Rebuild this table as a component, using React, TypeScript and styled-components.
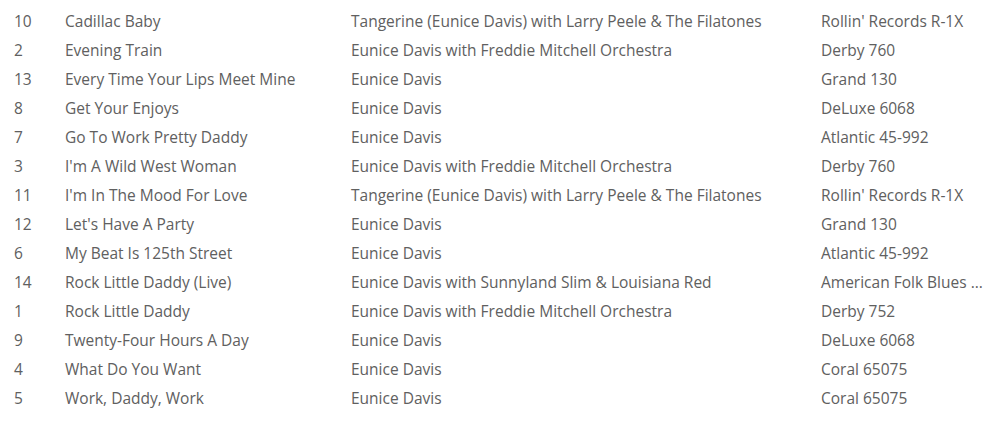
import styled, { createGlobalStyle } from 'styled-components'

const TRACKS = [
    ['10', 'Cadillac Baby', 'Tangerine (Eunice Davis) with Larry Peele & The Filatones', "Rollin' Records R-1X"],
    ['2', 'Evening Train', 'Eunice Davis with Freddie Mitchell Orchestra', 'Derby 760'],
    ['13', 'Every Time Your Lips Meet Mine', 'Eunice Davis', 'Grand 130'],
    ['8', 'Get Your Enjoys', 'Eunice Davis', 'DeLuxe 6068'],
    ['7', 'Go To Work Pretty Daddy', 'Eunice Davis', 'Atlantic 45-992'],
    ['3', "I'm A Wild West Woman", 'Eunice Davis with Freddie Mitchell Orchestra', 'Derby 760'],
    ['11', "I'm In The Mood For Love", 'Tangerine (Eunice Davis) with Larry Peele & The Filatones', "Rollin' Records R-1X"],
    ['12', "Let's Have A Party", 'Eunice Davis', 'Grand 130'],
    ['6', 'My Beat Is 125th Street', 'Eunice Davis', 'Atlantic 45-992'],
    ['14', 'Rock Little Daddy (Live)', 'Eunice Davis with Sunnyland Slim & Louisiana Red', 'American Folk Blues ...'],
    ['1', 'Rock Little Daddy', 'Eunice Davis with Freddie Mitchell Orchestra', 'Derby 752'],
    ['9', 'Twenty-Four Hours A Day', 'Eunice Davis', 'DeLuxe 6068'],
    ['4', 'What Do You Want', 'Eunice Davis', 'Coral 65075'],
    ['5', 'Work, Daddy, Work', 'Eunice Davis', 'Coral 65075'],
]

const Global = createGlobalStyle`
    body {
        margin: 0;
        background: #fff;
        font-family: "Open Sans", "Noto Sans", sans-serif;
    }
`

const List = styled.div`
    padding: 6px 0 0 14px;
`

const Row = styled.div`
    display: grid;
    grid-template-columns: 51px 286px 470px 175px;
    height: 29px;
    align-items: center;
    font-size: 15.5px;
    color: #606060;
`

const Cell = styled.div`
    white-space: nowrap;
`

export default function App() {
    return (
        <>
            <Global />
            <List>
                {TRACKS.map(([no, title, artist, label]) => (
                    <Row key={no}>
                        <Cell>{no}</Cell>
                        <Cell>{title}</Cell>
                        <Cell>{artist}</Cell>
                        <Cell>{label}</Cell>
                    </Row>
                ))}
            </List>
        </>
    )
}
